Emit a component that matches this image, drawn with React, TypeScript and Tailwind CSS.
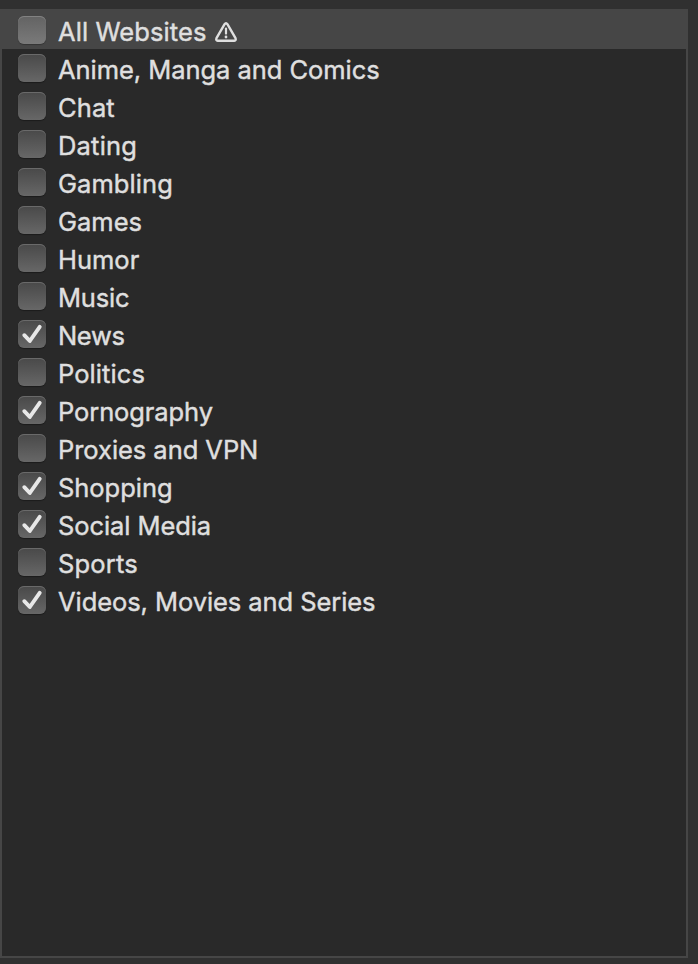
type Category = { label: string; checked?: boolean; warning?: boolean; tracking: string };

const categories: Category[] = [
  { label: 'All Websites', warning: true, tracking: 'tracking-[0.08px]' },
  { label: 'Anime, Manga and Comics', tracking: 'tracking-[-0.05px]' },
  { label: 'Chat', tracking: 'tracking-[0.1px]' },
  { label: 'Dating', tracking: 'tracking-[0.2px]' },
  { label: 'Gambling', tracking: 'tracking-[0.06px]' },
  { label: 'Games', tracking: 'tracking-[0px]' },
  { label: 'Humor', tracking: 'tracking-[0px]' },
  { label: 'Music', tracking: 'tracking-[-0.2px]' },
  { label: 'News', checked: true, tracking: 'tracking-[-0.35px]' },
  { label: 'Politics', tracking: 'tracking-[0.08px]' },
  { label: 'Pornography', checked: true, tracking: 'tracking-[-0.1px]' },
  { label: 'Proxies and VPN', tracking: 'tracking-[-0.05px]' },
  { label: 'Shopping', checked: true, tracking: 'tracking-[-0.04px]' },
  { label: 'Social Media', checked: true, tracking: 'tracking-[-0.08px]' },
  { label: 'Sports', tracking: 'tracking-[0.2px]' },
  { label: 'Videos, Movies and Series', checked: true, tracking: 'tracking-[-0.07px]' },
];

function Checkbox({ checked, light }: { checked?: boolean; light?: boolean }) {
  return (
    <span
      role="checkbox"
      aria-checked={!!checked}
      className={`mt-[5px] block size-7 shrink-0 rounded-[6px] bg-linear-to-b ${
        light
          ? 'from-[#636363] to-[#7a7a7a] shadow-[inset_0_1px_0_#828282,0_1px_1px_rgba(0,0,0,0.25)]'
          : 'from-[#494949] to-[#676767] shadow-[inset_0_1px_0_#6a6a6a,0_1px_1px_rgba(0,0,0,0.35)]'
      }`}
    >
      {checked && (
        <svg viewBox="0 0 28 28" className="size-7" fill="none">
          <path d="M6.3 15.2 11.8 21 21.7 6.8" stroke="#e8e8e8" strokeWidth="3.9" strokeLinecap="round" strokeLinejoin="round" />
        </svg>
      )}
    </span>
  );
}

function WarningIcon() {
  return (
    <svg viewBox="0 0 24 22" className="mt-[10px] ml-2 h-[22px] w-6" fill="none" stroke="#dfdfdf">
      <path d="M10.6 3.2Q12 1.2 13.4 3.2L21.5 17.1Q22.4 19.5 20.2 19.8H3.8Q1.6 19.5 2.5 17.1Z" strokeWidth="2.4" strokeLinejoin="round" />
      <path d="M12 7.6V12.6" strokeWidth="2.2" strokeLinecap="round" />
      <circle cx="12" cy="16" r="1.4" fill="#dfdfdf" stroke="none" />
    </svg>
  );
}

export default function App() {
  return (
    <div className="h-[964px] w-[698px] overflow-hidden bg-[#303030] pt-[9px] font-['Inter','Liberation_Sans',sans-serif]">
      <ul className="h-[949px] w-[688px] border-2 border-[#464646] bg-[#292929]">
        {categories.map((c, i) => (
          <li key={c.label} className={`flex h-[38px] items-start pl-4 ${i === 0 ? 'bg-[#464646]' : ''}`}>
            <Checkbox checked={c.checked} light={i === 0} />
            <span className={`ml-3 block pt-[2px] text-[25.5px] leading-[38px] whitespace-nowrap text-[#dfdfdf] [-webkit-text-stroke:0.45px_#dfdfdf] ${c.tracking}`}>
              {c.label}
            </span>
            {c.warning && <WarningIcon />}
          </li>
        ))}
      </ul>
    </div>
  );
}
